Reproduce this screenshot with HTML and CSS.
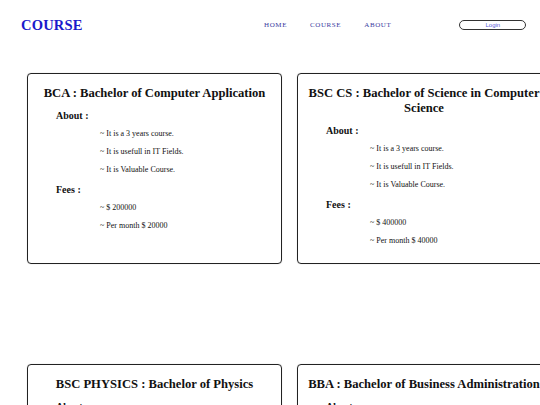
FILE: index.html
```html
<!DOCTYPE html>
<html>
<head>
<meta charset="utf-8">
<title>Course</title>
<link rel="stylesheet" href="styles.css">
</head>
<body>
  <header class="topbar">
    <div class="logo">COURSE</div>
    <nav class="menu">
      <a href="#">HOME</a>
      <a href="#">COURSE</a>
      <a href="#">ABOUT</a>
    </nav>
    <button class="login">Login</button>
  </header>

  <main class="courses">
    <div class="row">
      <div class="card card-left">
        <h2 class="card-title">BCA : Bachelor of Computer Application</h2>
        <h3 class="label">About :</h3>
        <ul class="points">
          <li>~ It is a 3 years course.</li>
          <li>~ It is usefull in IT Fields.</li>
          <li>~ It is Valuable Course.</li>
        </ul>
        <h3 class="label fees">Fees :</h3>
        <ul class="points">
          <li>~ $ 200000</li>
          <li>~ Per month $ 20000</li>
        </ul>
      </div>
      <div class="card card-right">
        <h2 class="card-title">BSC CS : Bachelor of Science in Computer Science</h2>
        <h3 class="label">About :</h3>
        <ul class="points">
          <li>~ It is a 3 years course.</li>
          <li>~ It is usefull in IT Fields.</li>
          <li>~ It is Valuable Course.</li>
        </ul>
        <h3 class="label fees">Fees :</h3>
        <ul class="points">
          <li>~ $ 400000</li>
          <li>~ Per month $ 40000</li>
        </ul>
      </div>
    </div>
    <div class="row">
      <div class="card card-left">
        <h2 class="card-title">BSC PHYSICS : Bachelor of Physics</h2>
        <h3 class="label">About :</h3>
        <ul class="points">
          <li>~ It is a 3 years course.</li>
          <li>~ It is usefull in Science Fields.</li>
          <li>~ It is Valuable Course.</li>
        </ul>
        <h3 class="label fees">Fees :</h3>
        <ul class="points">
          <li>~ $ 150000</li>
          <li>~ Per month $ 15000</li>
        </ul>
      </div>
      <div class="card card-right">
        <h2 class="card-title">BBA : Bachelor of Business Administration</h2>
        <h3 class="label">About :</h3>
        <ul class="points">
          <li>~ It is a 3 years course.</li>
          <li>~ It is usefull in Business Fields.</li>
          <li>~ It is Valuable Course.</li>
        </ul>
        <h3 class="label fees">Fees :</h3>
        <ul class="points">
          <li>~ $ 250000</li>
          <li>~ Per month $ 25000</li>
        </ul>
      </div>
    </div>
  </main>
</body>
</html>
```

FILE: styles.css
```css
html, body {
  margin: 0;
  padding: 0;
  background: #fff;
  overflow: hidden;
  font-family: "Liberation Serif", "Times New Roman", serif;
  color: #111;
}

.topbar {
  display: flex;
  align-items: center;
  height: 50px;
  padding-left: 21px;
}

.logo {
  font-size: 14.5px;
  font-weight: bold;
  letter-spacing: 0.2px;
  color: #1a1acb;
  width: 60px;
}

.menu {
  display: flex;
  gap: 23px;
  margin-left: 183px;
}

.menu a {
  font-size: 7px;
  letter-spacing: 0.6px;
  color: #3a3aa0;
  text-decoration: none;
}

.login {
  margin-left: 68px;
  width: 67px;
  height: 10px;
  padding: 0;
  border: 1px solid #333;
  border-radius: 5px;
  background: #fff;
  font-family: "Liberation Sans", Arial, sans-serif;
  font-size: 6px;
  line-height: 8px;
  color: #5a5ad6;
}

.courses {
  padding: 23px 0 0 27px;
}

.row {
  display: flex;
  gap: 15px;
  margin-bottom: 100px;
}

.card {
  flex-shrink: 0;
  box-sizing: border-box;
  height: 191px;
  padding: 12px 8px 0 8px;
  border: 1.5px solid #222;
  border-radius: 4px;
  box-shadow: 0 0 1px rgba(0, 0, 0, 0.3);
}

.card-left { width: 255px; }
.card-right { width: 254px; }

.card-title {
  margin: 0;
  font-size: 12.6px;
  line-height: 15px;
  font-weight: bold;
  text-align: center;
}

.label {
  margin: 9px 0 3px 20px;
  font-size: 10px;
  line-height: 12px;
  font-weight: bold;
}

.label.fees {
  margin-top: 5px;
  margin-bottom: 3px;
}

.points {
  list-style: none;
  margin: 0;
  padding: 0 0 0 64px;
}

.points li {
  font-size: 8px;
  line-height: 18px;
}
```
